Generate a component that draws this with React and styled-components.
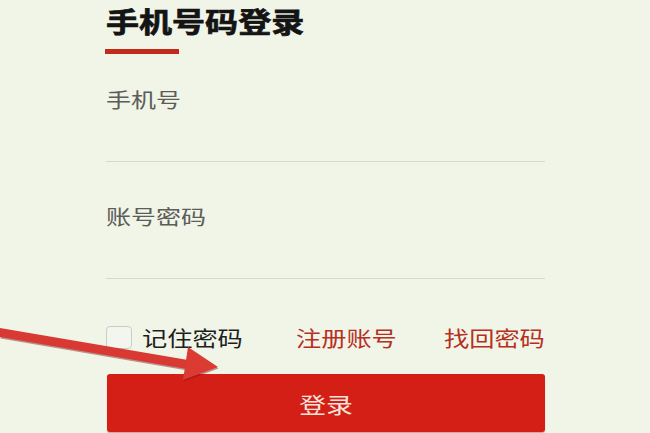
import React from 'react';
import styled, { createGlobalStyle } from 'styled-components';

const GlobalStyle = createGlobalStyle`
    html, body {
        margin: 0;
        padding: 0;
        background: #f0f5e7;
    }
    body {
        font-family: "Noto Sans CJK SC", "Noto Sans", sans-serif;
        overflow: hidden;
    }
`;

export default function App() {
    return (
        <>
            <GlobalStyle />
            <PageStyled>
                <FormStyled>
                    <TitleStyled>手机号码登录</TitleStyled>
                    <TitleBarStyled />
                    <FieldStyled>
                        <LabelStyled>手机号</LabelStyled>
                        <InputStyled type="tel" />
                    </FieldStyled>
                    <FieldStyled $gap={45}>
                        <LabelStyled>账号密码</LabelStyled>
                        <InputStyled type="password" />
                    </FieldStyled>
                    <OptionsRowStyled>
                        <RememberStyled>
                            <CheckboxStyled />
                            <RowTextStyled>记住密码</RowTextStyled>
                        </RememberStyled>
                        <LinksStyled>
                            <RowTextStyled $link>注册账号</RowTextStyled>
                            <RowTextStyled $link>找回密码</RowTextStyled>
                        </LinksStyled>
                    </OptionsRowStyled>
                    <SubmitStyled>
                        <SubmitTextStyled>登录</SubmitTextStyled>
                    </SubmitStyled>
                </FormStyled>
                <Arrow />
            </PageStyled>
        </>
    );
}

// the red pointer drawn over the screenshot
function Arrow() {
    return (
        <ArrowStyled width="240" height="100" viewBox="0 0 240 100">
            <g transform="translate(0.5 1.5)" fill="#7a1a15" opacity="0.45">
                <polygon points="0,18 0,27 187,59 188,50" />
                <polygon points="188,37 218,57 183,70" />
            </g>
            <polygon points="0,18 0,27 187,59 188,50" fill="#d83a33" />
            <polygon points="188,37 218,57 183,70" fill="#dc3b34" />
        </ArrowStyled>
    );
}

const PageStyled = styled.div`
    position: relative;
    width: 650px;
    height: 433px;
    overflow: hidden;
`;

const FormStyled = styled.div`
    display: flex;
    flex-direction: column;
    width: 439px;
    padding: 7px 0 0 106px;
`;

const TitleStyled = styled.h1`
    display: inline-block;
    margin: 0;
    font-size: 28px;
    line-height: 28px;
    font-weight: 700;
    color: #141414;
    -webkit-text-stroke: 0.7px #141414;
    transform: scaleX(1.18);
    transform-origin: left center;
    white-space: nowrap;
`;

const TitleBarStyled = styled.div`
    width: 74px;
    height: 5px;
    margin-top: 14px;
    margin-left: -1px;
    background: #c42a1c;
`;

const FieldStyled = styled.label`
    display: flex;
    flex-direction: column;
    margin-top: ${(p) => p.$gap || 36}px;
`;

const LabelStyled = styled.span`
    display: inline-block;
    font-size: 20px;
    line-height: 20px;
    color: #5c5c58;
    transform: scaleX(1.25);
    transform-origin: left center;
    white-space: nowrap;
`;

const InputStyled = styled.input`
    height: 51px;
    padding: 0;
    border: none;
    border-bottom: 1.5px solid #d3dbcf;
    background: transparent;
    outline: none;
`;

const OptionsRowStyled = styled.div`
    display: flex;
    align-items: center;
    margin-top: 47px;
`;

const RememberStyled = styled.div`
    display: flex;
    align-items: center;
    gap: 10px;
`;

const LinksStyled = styled.div`
    display: flex;
    gap: 47px;
    margin-left: auto;
`;

const CheckboxStyled = styled.span`
    box-sizing: border-box;
    width: 26px;
    height: 23px;
    border: 1.5px solid #c9cec3;
    border-radius: 4px;
    background: #f3f6ee;
`;

const RowTextStyled = styled.span`
    display: inline-block;
    width: 101px;
    font-size: 21px;
    line-height: 21px;
    color: ${(p) => (p.$link ? '#b7301f' : '#1e1e1e')};
    transform: scaleX(1.2);
    transform-origin: left center;
    white-space: nowrap;
`;

const SubmitStyled = styled.button`
    display: flex;
    align-items: center;
    justify-content: center;
    height: 58px;
    margin-top: 25px;
    margin-left: 1px;
    padding: 0;
    border: none;
    border-radius: 3px;
    background: #d31f16;
    box-shadow: 0 1px 1px rgba(120, 20, 10, 0.35);
    cursor: pointer;
`;

const SubmitTextStyled = styled.span`
    display: inline-block;
    font-family: "Noto Sans CJK SC", sans-serif;
    font-size: 22px;
    line-height: 22px;
    color: #f6e3db;
    transform: scaleX(1.22);
`;

const ArrowStyled = styled.svg`
    position: absolute;
    left: 0;
    top: 310px;
`;
